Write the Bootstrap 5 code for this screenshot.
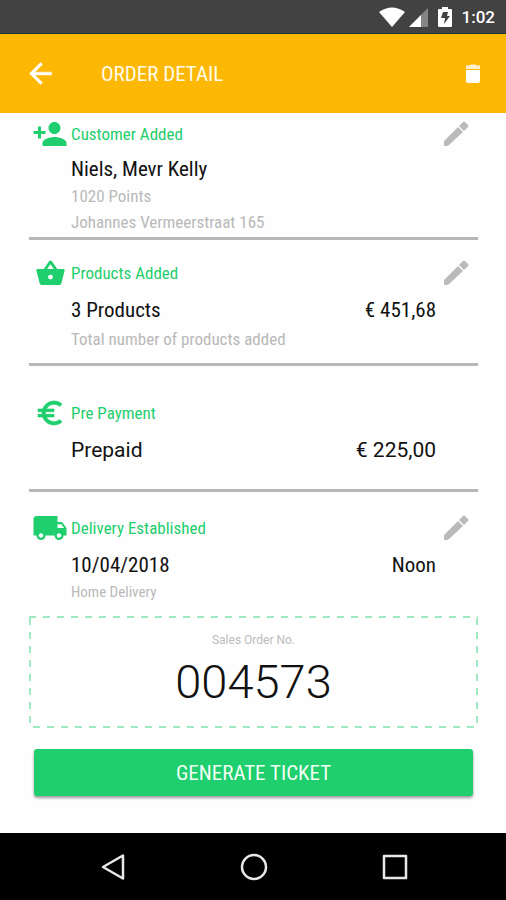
<!DOCTYPE html>
<html lang="en">
<head>
<meta charset="utf-8">
<meta name="viewport" content="width=device-width, initial-scale=1">
<title>Order Detail</title>
<link href="https://cdn.jsdelivr.net/npm/bootstrap@5.3.0/dist/css/bootstrap.min.css" rel="stylesheet">
<style>
body { font-family: "Roboto Condensed", Roboto, sans-serif; color: #111; background: #fefefe; }
svg { display: block; }
.status-bar { height: 34px; background: #424242; border-bottom: 1px solid #17333a; padding: 0 11px; font: 500 17px/34px Roboto, sans-serif; }
.app-bar { height: 79px; background: #fcb805; padding: 0 21px 0 24px; }
.app-title { font-size: 21px; line-height: 28px; margin-left: 44px; color: #fffbe8; }
.icon-btn { border: 0; padding: 0; background: none; color: inherit; }
.order-body { padding: 0 28px 0 29px; }
.step { border-bottom: 3px solid #b8b8b8; }
.step-head { height: 42px; color: #1fce6c; }
.step-icon { width: 42px; flex: none; }
.step-title { font-size: 17px; line-height: 24px; }
.step-edit { color: #bababa; margin-right: 9px; }
.step-value { font-size: 21px; line-height: 28px; }
.step-value.wide-face { font-family: Roboto, sans-serif; }
.step-note { font-size: 17px; line-height: 26px; color: #b9b9b9; }
.step-note.note-small { font-size: 15px; }
.step-content { padding: 0 42px; }
.s-customer { padding-bottom: 2px; }
.s-products { padding: 12px 0 11px; }
.s-payment { padding: 26px 0 25px; }
.s-delivery { padding: 15px 0 11px; border-bottom: 0; }
.spaced { margin-top: 2px; }
.ticket-box {
  --dash-x: repeating-linear-gradient(90deg, #9ee9bf 0 7px, transparent 7px 14px);
  --dash-y: repeating-linear-gradient(180deg, #9ee9bf 0 7px, transparent 7px 14px);
  padding: 14px 0 14px;
  background: var(--dash-x) 0 0 / 100% 2px no-repeat, var(--dash-x) 4px 100% / 100% 2px no-repeat,
    var(--dash-y) 0 2px / 2px 100% no-repeat, var(--dash-y) 100% 2px / 2px 100% no-repeat;
}
.ticket-label { font: 12px/20px Roboto, sans-serif; color: #bcbcbc; }
.ticket-number { font: 300 47px/64px Roboto, sans-serif; color: #111; }
.generate { height: 47px; margin: 21px 5px 37px; padding: 0; border: 0; border-radius: 3px; background: #1fce6c; color: #f0fff5; font-size: 21px; line-height: 28px; box-shadow: 0 2px 3px #0006; }
.generate:hover { background: #1bbd62; color: #fff; }
.nav-keys { min-height: 67px; background: #000; color: #e8e8e8; padding: 0 97px 0 98px; }
</style>
</head>
<body>
<div class="min-vh-100 d-flex flex-column">
  <div class="status-bar d-flex justify-content-end align-items-center text-white">
    <svg width="26" height="20" viewBox="0 0 26 20" fill="#fff" aria-hidden="true"><path d="M0 5Q13-4 26 5L13 20Z"/></svg>
    <svg class="ms-1" width="19" height="20" viewBox="0 0 19 20" aria-hidden="true"><path d="M0 20 19 1V20Z" fill="#858585"/><path d="M0 20 12 8V20Z" fill="#fff"/></svg>
    <svg class="ms-2 me-2" width="18" height="22" viewBox="0 0 18 22" aria-hidden="true"><path d="M3 3h3V1h6v2h3q1 0 1 1v16q0 1-1 1H3q-1 0-1-1V4q0-1 1-1Z" fill="#fff"/><path d="M7 6h5l-1 4h3l-6 8 1-6H5Z" fill="#424242"/></svg>
    <span>1:02</span>
  </div>

  <header class="app-bar d-flex align-items-center text-white">
    <button class="icon-btn" type="button" aria-label="Back">
      <svg width="33" height="33" viewBox="0 0 24 24" fill="currentColor" stroke="currentColor" stroke-width=".4"><path d="M20 11H7.830l5.590-5.590L12 4l-8 8 8 8 1.410-1.410L7.830 13H20z"/></svg>
    </button>
    <h1 class="app-title mb-0 fw-normal">ORDER DETAIL</h1>
    <button class="icon-btn ms-auto" type="button" aria-label="Delete order">
      <svg width="24" height="24" viewBox="0 0 24 24" fill="currentColor"><path d="M5 8v11c0 1.100.9 2 2 2h10c1.100 0 2-.9 2-2V8z"/><path d="M19 3.500h-3.500l-1-1h-5l-1 1H5V7h14z" opacity=".8"/></svg>
    </button>
  </header>

  <main class="order-body flex-grow-1">
    <section class="step s-customer">
      <div class="step-head d-flex align-items-center">
        <div class="step-icon d-flex justify-content-center"><svg width="42" height="36" viewBox="0 0 28 24" fill="currentColor" aria-hidden="true"><path d="M17 12c2.210 0 4-1.790 4-4s-1.790-4-4-4-4 1.790-4 4 1.790 4 4 4zM8 10V7H6v3H3v2h3v3h2v-3h3v-2zM17 14c-2.670 0-8 1.340-8 4v2h16v-2c0-2.660-5.330-4-8-4z"/></svg></div>
        <h2 class="step-title mb-0 fw-normal">Customer Added</h2>
        <button class="icon-btn step-edit ms-auto" type="button" aria-label="Edit customer"><svg width="26" height="26" viewBox="0 0 26 26" fill="currentColor"><path d="M1 20 15 6l5 5L6 24Q5 25 3 25H1zM16 5l4-4q1-1 2 0l3 3q1 1 0 2l-4 4z"/></svg></button>
      </div>
      <div class="step-content">
        <div class="step-value">Niels, Mevr Kelly</div>
        <div class="step-note">1020 Points</div>
        <div class="step-note">Johannes Vermeerstraat 165</div>
      </div>
    </section>

    <section class="step s-products">
      <div class="step-head d-flex align-items-center">
        <div class="step-icon d-flex justify-content-center"><svg width="31" height="31" viewBox="0 0 24 24" fill="currentColor" aria-hidden="true"><path fill-rule="evenodd" d="M17.210 8.500 13 2.400q-1-1-2 0L6.790 8.500H2c-.55 0-1 .45-1 1l2.600 10c.23.84 1 1.460 1.920 1.460h13c.92 0 1.690-.62 1.930-1.460L23 9.500c0-.55-.45-1-1-1zM9.400 8.500 12 4.800l2.600 3.700zM12 16.700a1.900 1.900 0 1 1 0-3.800 1.900 1.900 0 0 1 0 3.800z"/></svg></div>
        <h2 class="step-title mb-0 fw-normal">Products Added</h2>
        <button class="icon-btn step-edit ms-auto" type="button" aria-label="Edit products"><svg width="26" height="26" viewBox="0 0 26 26" fill="currentColor"><path d="M1 20 15 6l5 5L6 24Q5 25 3 25H1zM16 5l4-4q1-1 2 0l3 3q1 1 0 2l-4 4z"/></svg></button>
      </div>
      <div class="step-content">
        <div class="step-value spaced d-flex justify-content-between"><span>3 Products</span><span>€ 451,68</span></div>
        <div class="step-note spaced">Total number of products added</div>
      </div>
    </section>

    <section class="step s-payment">
      <div class="step-head d-flex align-items-center">
        <div class="step-icon d-flex justify-content-center"><svg width="32" height="32" viewBox="0 0 24 24" fill="currentColor" stroke="currentColor" stroke-width=".5" aria-hidden="true"><path d="M15 18.500c-2.510 0-4.680-1.420-5.760-3.500H15v-2H8.580c-.05-.33-.08-.66-.08-1s.03-.67.08-1H15V9H9.240C10.320 6.920 12.500 5.500 15 5.500c1.610 0 3.090.59 4.230 1.570L21 5.300C19.410 3.870 17.300 3 15 3c-3.920 0-7.240 2.510-8.480 6H3v2h3.060c-.04.33-.06.66-.06 1s.02.67.06 1H3v2h3.520c1.240 3.490 4.560 6 8.480 6 2.310 0 4.410-.87 6-2.300l-1.780-1.770c-1.130.98-2.600 1.570-4.220 1.570z"/></svg></div>
        <h2 class="step-title mb-0 fw-normal">Pre Payment</h2>
      </div>
      <div class="step-content">
        <div class="step-value wide-face spaced d-flex justify-content-between"><span>Prepaid</span><span>€ 225,00</span></div>
      </div>
    </section>

    <section class="step s-delivery">
      <div class="step-head d-flex align-items-center">
        <div class="step-icon d-flex justify-content-center"><svg width="34" height="36" viewBox="1 0 22 24" fill="currentColor" aria-hidden="true"><path d="M20 8h-3V4H3c-1.100 0-2 .9-2 2v11h2c0 1.660 1.340 3 3 3s3-1.340 3-3h6c0 1.660 1.340 3 3 3s3-1.340 3-3h2v-5zM6 18.500c-.83 0-1.500-.67-1.500-1.500s.67-1.500 1.500-1.500 1.500.67 1.500 1.500-.67 1.500-1.500 1.500zm13.500-9l1.960 2.500H17V9.500zm-1.500 9c-.83 0-1.500-.67-1.500-1.500s.67-1.500 1.500-1.500 1.500.67 1.500 1.500-.67 1.500-1.500 1.500z"/></svg></div>
        <h2 class="step-title mb-0 fw-normal">Delivery Established</h2>
        <button class="icon-btn step-edit ms-auto" type="button" aria-label="Edit delivery"><svg width="26" height="26" viewBox="0 0 26 26" fill="currentColor"><path d="M1 20 15 6l5 5L6 24Q5 25 3 25H1zM16 5l4-4q1-1 2 0l3 3q1 1 0 2l-4 4z"/></svg></button>
      </div>
      <div class="step-content">
        <div class="step-value spaced d-flex justify-content-between"><span>10/04/2018</span><span>Noon</span></div>
        <div class="step-note note-small">Home Delivery</div>
      </div>
    </section>

    <div class="ticket-box text-center">
      <div class="ticket-label">Sales Order No.</div>
      <div class="ticket-number">004573</div>
    </div>

    <div class="d-grid">
      <button class="btn generate" type="button">GENERATE TICKET</button>
    </div>
  </main>

  <nav class="nav-keys d-flex justify-content-between align-items-center" aria-label="System">
    <button class="icon-btn" type="button" aria-label="Back"><svg width="30" height="30" viewBox="0 0 30 30" fill="none" stroke="currentColor" stroke-width="2.500" stroke-linejoin="round"><path d="M25 3.500V26.500L5 15Z"/></svg></button>
    <button class="icon-btn" type="button" aria-label="Home"><svg width="30" height="30" viewBox="0 0 30 30" fill="none" stroke="currentColor" stroke-width="2.500"><circle cx="15" cy="15" r="12"/></svg></button>
    <button class="icon-btn" type="button" aria-label="Recent apps"><svg width="30" height="30" viewBox="0 0 30 30" fill="none" stroke="currentColor" stroke-width="2.500" stroke-linejoin="round"><path d="M5 4H27V26H5Z"/></svg></button>
  </nav>
</div>
<script src="https://cdn.jsdelivr.net/npm/bootstrap@5.3.0/dist/js/bootstrap.bundle.min.js"></script>
</body>
</html>
